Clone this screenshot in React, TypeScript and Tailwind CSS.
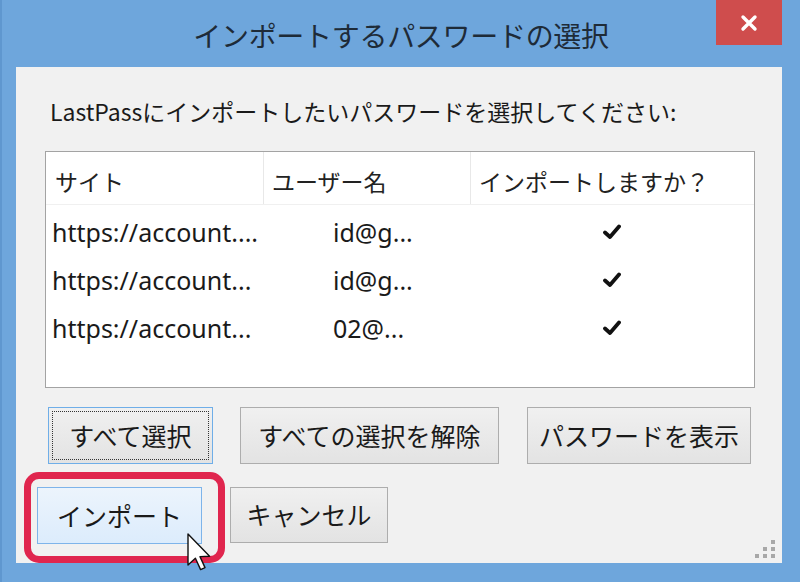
import React from 'react'

const rows = [
  { site: 'https://account....', user: 'id@g...' },
  { site: 'https://account...', user: 'id@g...' },
  { site: 'https://account...', user: '02@...' },
]

function Check() {
  return (
    <svg width="18" height="16" viewBox="0 0 18 16">
      <path d="M2 8.5 L7 13 L16 2.5" fill="none" stroke="#111" strokeWidth="3.8" strokeLinecap="round" strokeLinejoin="round" />
    </svg>
  )
}

function Cursor() {
  return (
    <svg width="24" height="38" viewBox="0 0 12 19" className="absolute left-[185px] top-[533px]">
      <path d="M0.5 0.5 L0.5 16 L4.2 12.6 L6.8 18.3 L9 17.3 L6.5 11.8 L11.3 11.6 Z" fill="#fff" stroke="#111" strokeWidth="0.7" strokeLinejoin="round" />
    </svg>
  )
}

function Grip() {
  const dots = [
    [2, 0],
    [1, 1], [2, 1],
    [0, 2], [1, 2], [2, 2],
  ]
  return (
    <div className="absolute right-[5px] bottom-[5px] w-[22px] h-[18px]">
      {dots.map(([c, r], i) => (
        <div
          key={i}
          className="absolute w-[4px] h-[4px] bg-[#a8a8a8]"
          style={{ left: c * 8, top: r * 7 }}
        />
      ))}
    </div>
  )
}

export default function App() {
  const ui = { fontFamily: '"Noto Sans", "Noto Sans CJK JP", sans-serif' }
  const jp = { fontFamily: '"Noto Sans CJK JP", sans-serif' }

  return (
    <div className="relative w-[800px] h-[582px] bg-[#6ea6dc] flex flex-col overflow-hidden border-l-[2px] border-[#5f97cf]" style={ui}>
      {/* title bar */}
      <div className="h-[67px] flex justify-center pt-[18px] text-[28px] leading-[34px] text-[#1e2b38] tracking-[-0.3px]" style={jp}>
        インポートするパスワードの選択
      </div>
      <div className="absolute top-0 right-[18px] w-[66px] h-[45px] bg-[#cf4d4d] flex items-center justify-center">
        <svg width="18" height="18" viewBox="0 0 18 18">
          <path d="M3 3 L15 15 M15 3 L3 15" stroke="#fff" strokeWidth="3.4" strokeLinecap="round" />
        </svg>
      </div>

      {/* client area */}
      <div className="relative flex-1 ml-[14px] mr-[18px] mb-[19px] bg-[#f1f1f1] flex flex-col">
        <div className="pl-[34px] pt-[29px] text-[23px] leading-[30px] text-[#1a1a1a]" style={jp}>
          LastPassにインポートしたいパスワードを選択してください:
        </div>

        <div className="ml-[29px] mt-[25px] w-[710px] h-[237px] bg-white border border-[#a3a3a3] flex flex-col">
          <div className="h-[53px] flex text-[23px] text-[#222] border-b border-[#f0f0f0]" style={jp}>
            <div className="w-[218px] pl-[9px] pt-[6px] flex items-center border-r border-[#e8e8e8]">サイト</div>
            <div className="w-[207px] pl-[8px] pt-[6px] flex items-center border-r border-[#e8e8e8]">ユーザー名</div>
            <div className="flex-1 pl-[8px] pt-[6px] flex items-center">インポートしますか？</div>
          </div>
          <div className="pt-[3px] text-[25px] leading-[48px] text-[#1a1a1a]">
            {rows.map((r, i) => (
              <div key={i} className="flex h-[48px]">
                <div className="w-[219px] pl-[6px]">{r.site}</div>
                <div className="w-[207px] pl-[68px]">{r.user}</div>
                <div className="flex-1 flex items-center justify-center pr-[2px]">
                  <Check />
                </div>
              </div>
            ))}
          </div>
        </div>

        <div className="flex mt-[19px] pl-[32px] gap-[27px] text-[25px] text-[#1a1a1a]" style={jp}>
          <button className="relative w-[165px] h-[57px] border border-[#6faee8] bg-gradient-to-b from-[#f0f0f0] to-[#e3e3e3] flex items-center justify-center">
            <span className="absolute inset-[3px] border border-dotted border-[#333]" />
            すべて選択
          </button>
          <button className="w-[259px] h-[57px] border border-[#adadad] bg-gradient-to-b from-[#f0f0f0] to-[#e3e3e3] flex items-center justify-center">
            すべての選択を解除
          </button>
          <button className="w-[224px] h-[57px] ml-[1px] border border-[#adadad] bg-gradient-to-b from-[#f0f0f0] to-[#e3e3e3] flex items-center justify-center">
            パスワードを表示
          </button>
        </div>

        <div className="flex mt-[23px] pl-[21px] gap-[28px] text-[25px] text-[#1a1a1a]" style={jp}>
          <button className="w-[165px] h-[57px] border border-[#7eb4ea] bg-gradient-to-b from-[#ecf4fc] to-[#dcecfc] flex items-center justify-center">
            インポート
          </button>
          <button className="w-[158px] h-[56px] border border-[#adadad] bg-gradient-to-b from-[#f0f0f0] to-[#e3e3e3] flex items-center justify-center">
            キャンセル
          </button>
        </div>

        {/* highlight */}
        <div className="absolute left-[8px] top-[405px] w-[201px] h-[91px] border-[7px] border-[#e0264e] rounded-[15px]" />

        <Grip />
      </div>

      <Cursor />
    </div>
  )
}
